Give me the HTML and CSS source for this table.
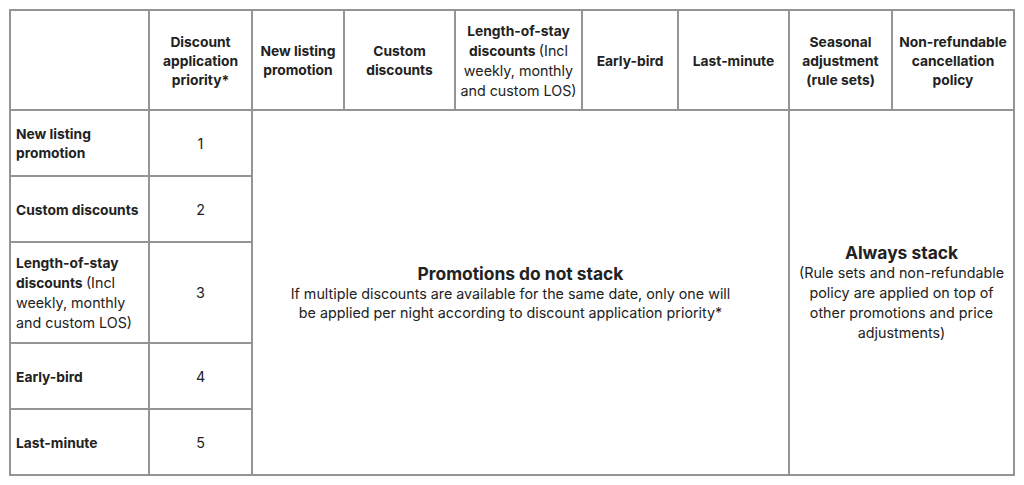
FILE: index.html
```html
<!DOCTYPE html>
<html lang="en">
<head>
<meta charset="utf-8">
<title>Discount stacking</title>
<link rel="stylesheet" href="styles.css">
</head>
<body>
<table class="grid">
  <colgroup>
    <col class="c1"><col class="c2"><col class="c3"><col class="c4"><col class="c5"><col class="c6"><col class="c7"><col class="c8"><col class="c9">
  </colgroup>
  <thead>
    <tr class="r-head">
      <th></th>
      <th>Discount<br>application<br>priority*</th>
      <th>New listing<br>promotion</th>
      <th>Custom<br>discounts</th>
      <th>Length-of-stay<br>discounts <span class="reg">(Incl<br>weekly, monthly<br>and custom LOS)</span></th>
      <th>Early-bird</th>
      <th>Last-minute</th>
      <th>Seasonal<br>adjustment<br>(rule sets)</th>
      <th>Non-refundable<br>cancellation<br>policy</th>
    </tr>
  </thead>
  <tbody>
    <tr class="r-short">
      <th class="row-label">New listing<br>promotion</th>
      <td class="num">1</td>
      <td class="merged" colspan="5" rowspan="5">
        <div class="note-title">Promotions do not stack</div>
        <div class="note-text note-shift">If multiple discounts are available for the same date, only one will<br>be applied per night according to discount application priority*</div>
      </td>
      <td class="merged" colspan="2" rowspan="5">
        <div class="note-title">Always stack</div>
        <div class="note-text note-tall">(Rule sets and non-refundable<br>policy are applied on top of<br>other promotions and price<br>adjustments)</div>
      </td>
    </tr>
    <tr class="r-short">
      <th class="row-label">Custom discounts</th>
      <td class="num">2</td>
    </tr>
    <tr class="r-tall">
      <th class="row-label">Length-of-stay<br>discounts <span class="reg">(Incl<br>weekly, monthly<br>and custom LOS)</span></th>
      <td class="num">3</td>
    </tr>
    <tr class="r-short">
      <th class="row-label">Early-bird</th>
      <td class="num">4</td>
    </tr>
    <tr class="r-short">
      <th class="row-label">Last-minute</th>
      <td class="num">5</td>
    </tr>
  </tbody>
</table>
</body>
</html>
```
FILE: styles.css
```css
html, body {
  margin: 0;
  padding: 0;
  background: #ffffff;
}

body {
  padding: 9px 0 0 9px;
  font-family: Inter, "Noto Sans", sans-serif;
  color: #222222;
}

.grid {
  border-collapse: collapse;
  table-layout: fixed;
  width: 1004px;
}

.grid th,
.grid td {
  border: 2px solid #949494;
  padding: 0;
  vertical-align: middle;
  text-align: center;
  font-size: 14.3px;
  line-height: 19px;
  white-space: nowrap;
}

.grid th {
  font-weight: 700;
  font-size: 13.8px;
  padding-top: 2px;
}

.c1 { width: 139px; }
.c2 { width: 103px; }
.c3 { width: 92px; }
.c4 { width: 111px; }
.c5 { width: 127px; }
.c6 { width: 96px; }
.c7 { width: 111px; }
.c8 { width: 103px; }
.c9 { width: 122px; }

.r-head { height: 100px; }
.r-short { height: 66px; }
.r-tall { height: 101px; }

.reg {
  font-weight: 400;
  font-size: 14.3px;
}

.grid .row-label {
  text-align: left;
  padding-left: 5px;
}

.num {
  font-weight: 400;
  padding-top: 2px;
}

.note-title {
  font-weight: 700;
  font-size: 17.4px;
  line-height: 21px;
}

.note-text {
  font-weight: 400;
  font-size: 14.3px;
  line-height: 19px;
}

.note-shift {
  padding-right: 20px;
}

.note-tall {
  line-height: 20px;
}
```
